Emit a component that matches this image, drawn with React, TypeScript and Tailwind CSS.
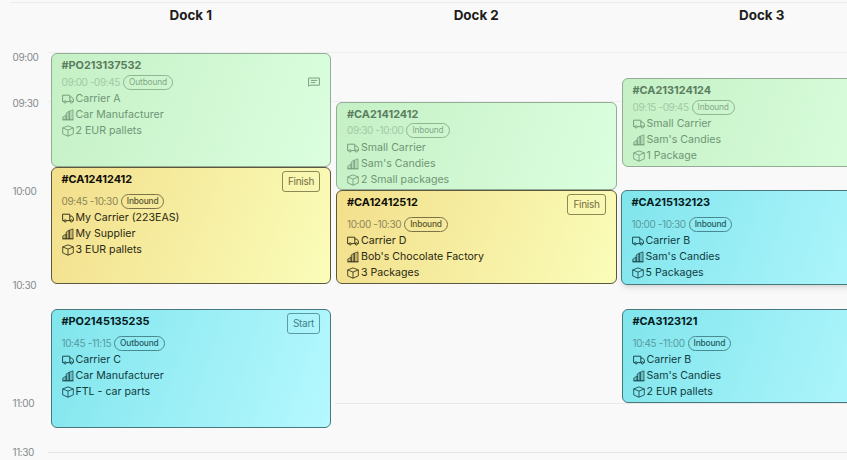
import clsx from 'clsx';

type Status = 'done' | 'active' | 'planned';

interface Slot {
  id: string;
  time: string;
  direction: 'Inbound' | 'Outbound';
  carrier: string;
  company: string;
  load: string;
  status: Status;
  action?: string;
  note?: boolean;
  box: string;
}

const docks: { name: string; slots: Slot[] }[] = [
  {
    name: 'Dock 1',
    slots: [
      { id: '#PO213137532', time: '09:00 -09:45', direction: 'Outbound', carrier: 'Carrier A', company: 'Car Manufacturer', load: '2 EUR pallets', status: 'done', note: true, box: 'h-[114px]' },
      { id: '#CA12412412', time: '09:45 -10:30', direction: 'Inbound', carrier: 'My Carrier (223EAS)', company: 'My Supplier', load: '3 EUR pallets', status: 'active', action: 'Finish', box: 'h-[117px]' },
      { id: '#PO2145135235', time: '10:45 -11:15', direction: 'Outbound', carrier: 'Carrier C', company: 'Car Manufacturer', load: 'FTL - car parts', status: 'planned', action: 'Start', box: 'mt-[25px] h-[119px]' },
    ],
  },
  {
    name: 'Dock 2',
    slots: [
      { id: '#CA21412412', time: '09:30 -10:00', direction: 'Inbound', carrier: 'Small Carrier', company: "Sam's Candies", load: '2 Small packages', status: 'done', box: 'mt-[48.5px] h-[88.5px]' },
      { id: '#CA12412512', time: '10:00 -10:30', direction: 'Inbound', carrier: 'Carrier D', company: "Bob's Chocolate Factory", load: '3 Packages', status: 'active', action: 'Finish', box: 'h-[94px]' },
    ],
  },
  {
    name: 'Dock 3',
    slots: [
      { id: '#CA213124124', time: '09:15 -09:45', direction: 'Inbound', carrier: 'Small Carrier', company: "Sam's Candies", load: '1 Package', status: 'done', box: 'mt-[25px] h-[89px]' },
      { id: '#CA215132123', time: '10:00 -10:30', direction: 'Inbound', carrier: 'Carrier B', company: "Sam's Candies", load: '5 Packages', status: 'planned', box: 'mt-[23px] -ml-px h-[95px] w-[282px] shadow-md' },
      { id: '#CA3123121', time: '10:45 -11:00', direction: 'Inbound', carrier: 'Carrier B', company: "Sam's Candies", load: '2 EUR pallets', status: 'planned', box: 'mt-6 h-[94px]' },
    ],
  },
];

const hours = [
  { label: '09:00', row: 'h-[46px]' },
  { label: '09:30', row: 'h-[88px]' },
  { label: '10:00', row: 'h-[94px]' },
  { label: '10:30', row: 'h-[118px]' },
  { label: '11:00', row: 'h-[49px]' },
  { label: '11:30', row: 'h-4' },
];

const cardStyles: Record<Status, string> = {
  done: 'border-[#93ad96] from-[#c5f0c5] to-[#dbffdf] text-[#6f9575]',
  active: 'border-[#5d583c] from-[#f2df8b] to-[#fafdb9] text-[#2b2710]',
  planned: 'border-[#48777e] from-[#80e5ec] to-[#b5f8ff] text-[#0f3b41]',
};

const idStyles: Record<Status, string> = {
  done: 'text-[#5b7d60]',
  active: 'text-[#0f0d05]',
  planned: 'text-[#03191c]',
};

const timeStyles: Record<Status, string> = {
  done: 'text-[#a2c9a6]',
  active: 'text-[#8e8557]',
  planned: 'text-[#58999f]',
};

const badgeStyles: Record<Status, string> = {
  done: 'border-[#8fb594] text-[#83a988]',
  active: 'border-[#7c7448] text-[#5a532e]',
  planned: 'border-[#498990] text-[#225a61]',
};

const actionStyles: Record<Status, string> = {
  done: 'border-[#8fb594] text-[#83a988]',
  active: 'border-[#8f8755] text-[#746c40]',
  planned: 'border-[#5c9ba4] text-[#437f88]',
};

function TruckIcon() {
  return (
    <svg className="h-[10px] w-3 shrink-0" viewBox="0 0 12 10" fill="none" stroke="currentColor" strokeWidth="0.9" strokeLinejoin="round">
      <path d="M2 7.6H.6V1.2h7.2v6.4H4.2M7.8 3h1.9l1.7 2.1v2.5h-.9M7.8 7.6h.6" />
      <circle cx="3.1" cy="7.9" r="1.1" />
      <circle cx="9.4" cy="7.9" r="1.1" />
    </svg>
  );
}

function CompanyIcon() {
  return (
    <svg className="h-3 w-3 shrink-0" viewBox="0 0 12 12" fill="none" stroke="currentColor" strokeWidth="0.65" strokeLinejoin="round">
      <path d="M.8 10.8V8l3.4-2v4.8zM4.2 10.8V4l3-1.8v8.6zM7.2 10.8V2.2L11 .9v9.9z" fill="currentColor" fillOpacity="0.25" />
      <path d="M.4 10.8h11.2" />
    </svg>
  );
}

function BoxIcon() {
  return (
    <svg className="h-3 w-3 shrink-0" viewBox="0 0 12 12" fill="none" stroke="currentColor" strokeWidth="0.8" strokeLinejoin="round">
      <path d="M6 .9l5.3 2v6L6 11.2.7 8.9v-6zM.7 2.9L6 5.1l5.3-2.2M6 5.1v6.1" />
    </svg>
  );
}

function NoteIcon() {
  return (
    <svg className="mt-[20px] h-[10px] w-3" viewBox="0 0 12 10" fill="none" stroke="currentColor" strokeWidth="0.9">
      <path d="M.6 1h10.8v7.2H2.2L.6 9.2zM2.8 3.4h6.4M2.8 5.6h4.6" />
    </svg>
  );
}

function SlotCard({ slot }: { slot: Slot }) {
  return (
    <div className={clsx('flex shrink-0 flex-col rounded-md border bg-linear-110 pt-[3px] pr-[10px] pl-[10px]', cardStyles[slot.status], slot.box)}>
      <div className={clsx('flex items-start justify-between', slot.status === 'done' ? 'h-[17px]' : 'h-[22px]')}>
        <div className={clsx('text-[10.9px] leading-[17px] font-bold', idStyles[slot.status])}>{slot.id}</div>
        {slot.action && (
          <button className={clsx('h-[21px] rounded-[3px] border px-[5px] text-[10px] leading-[19px] tracking-[-0.03em]', actionStyles[slot.status])}>{slot.action}</button>
        )}
        {slot.note && <NoteIcon />}
      </div>
      <div className="flex h-4 items-center gap-[3px]">
        <span className={clsx('text-[10px] tracking-[-0.04em]', timeStyles[slot.status])}>{slot.time}</span>
        <span className={clsx('h-[15px] rounded-full border px-[5px] text-[8.4px] leading-[13px] tracking-[-0.02em]', slot.status !== 'done' && 'font-medium', badgeStyles[slot.status])}>{slot.direction}</span>
      </div>
      <div className="pt-px text-[10.6px] leading-4">
        <div className="flex items-center gap-[2px]"><TruckIcon />{slot.carrier}</div>
        <div className="flex items-center gap-[2px]"><CompanyIcon />{slot.company}</div>
        <div className="flex items-center gap-[2px]"><BoxIcon />{slot.load}</div>
      </div>
    </div>
  );
}

export default function App() {
  return (
    <div className="relative h-[460px] w-[847px] overflow-hidden bg-[#f9f9f9] font-['Inter',sans-serif]">
      <div className="absolute top-[2px] right-0 left-[10px] h-px bg-[#ececec]" />
      <div className="absolute top-[52px] right-0 left-12 h-px bg-[#eeeeee]" />
      <div className="absolute top-[101px] right-0 left-12 h-px bg-[#eeeeee]" />
      <div className="absolute top-[403px] right-0 left-[335px] h-px bg-[#e8e8e8]" />
      <div className="absolute top-[452px] right-0 left-12 h-px bg-[#e3e3e3]" />
      <div className="relative flex">
        <div className="w-[50.5px] shrink-0 pt-[49px] pl-[12.5px]">
          {hours.map((h) => (
            <div key={h.label} className={clsx('text-[10px] leading-4 tracking-[-0.04em] text-[#84898d]', h.row)}>{h.label}</div>
          ))}
        </div>
        <div className="flex gap-[5px]">
          {docks.map((dock) => (
            <div key={dock.name} className="flex w-[280.5px] shrink-0 flex-col">
              <h2 className="h-[53px] pt-[6px] text-center text-[13.4px] leading-[19px] font-bold text-[#1d1d20]">{dock.name}</h2>
              {dock.slots.map((slot) => (
                <SlotCard key={slot.id} slot={slot} />
              ))}
            </div>
          ))}
        </div>
      </div>
    </div>
  );
}
